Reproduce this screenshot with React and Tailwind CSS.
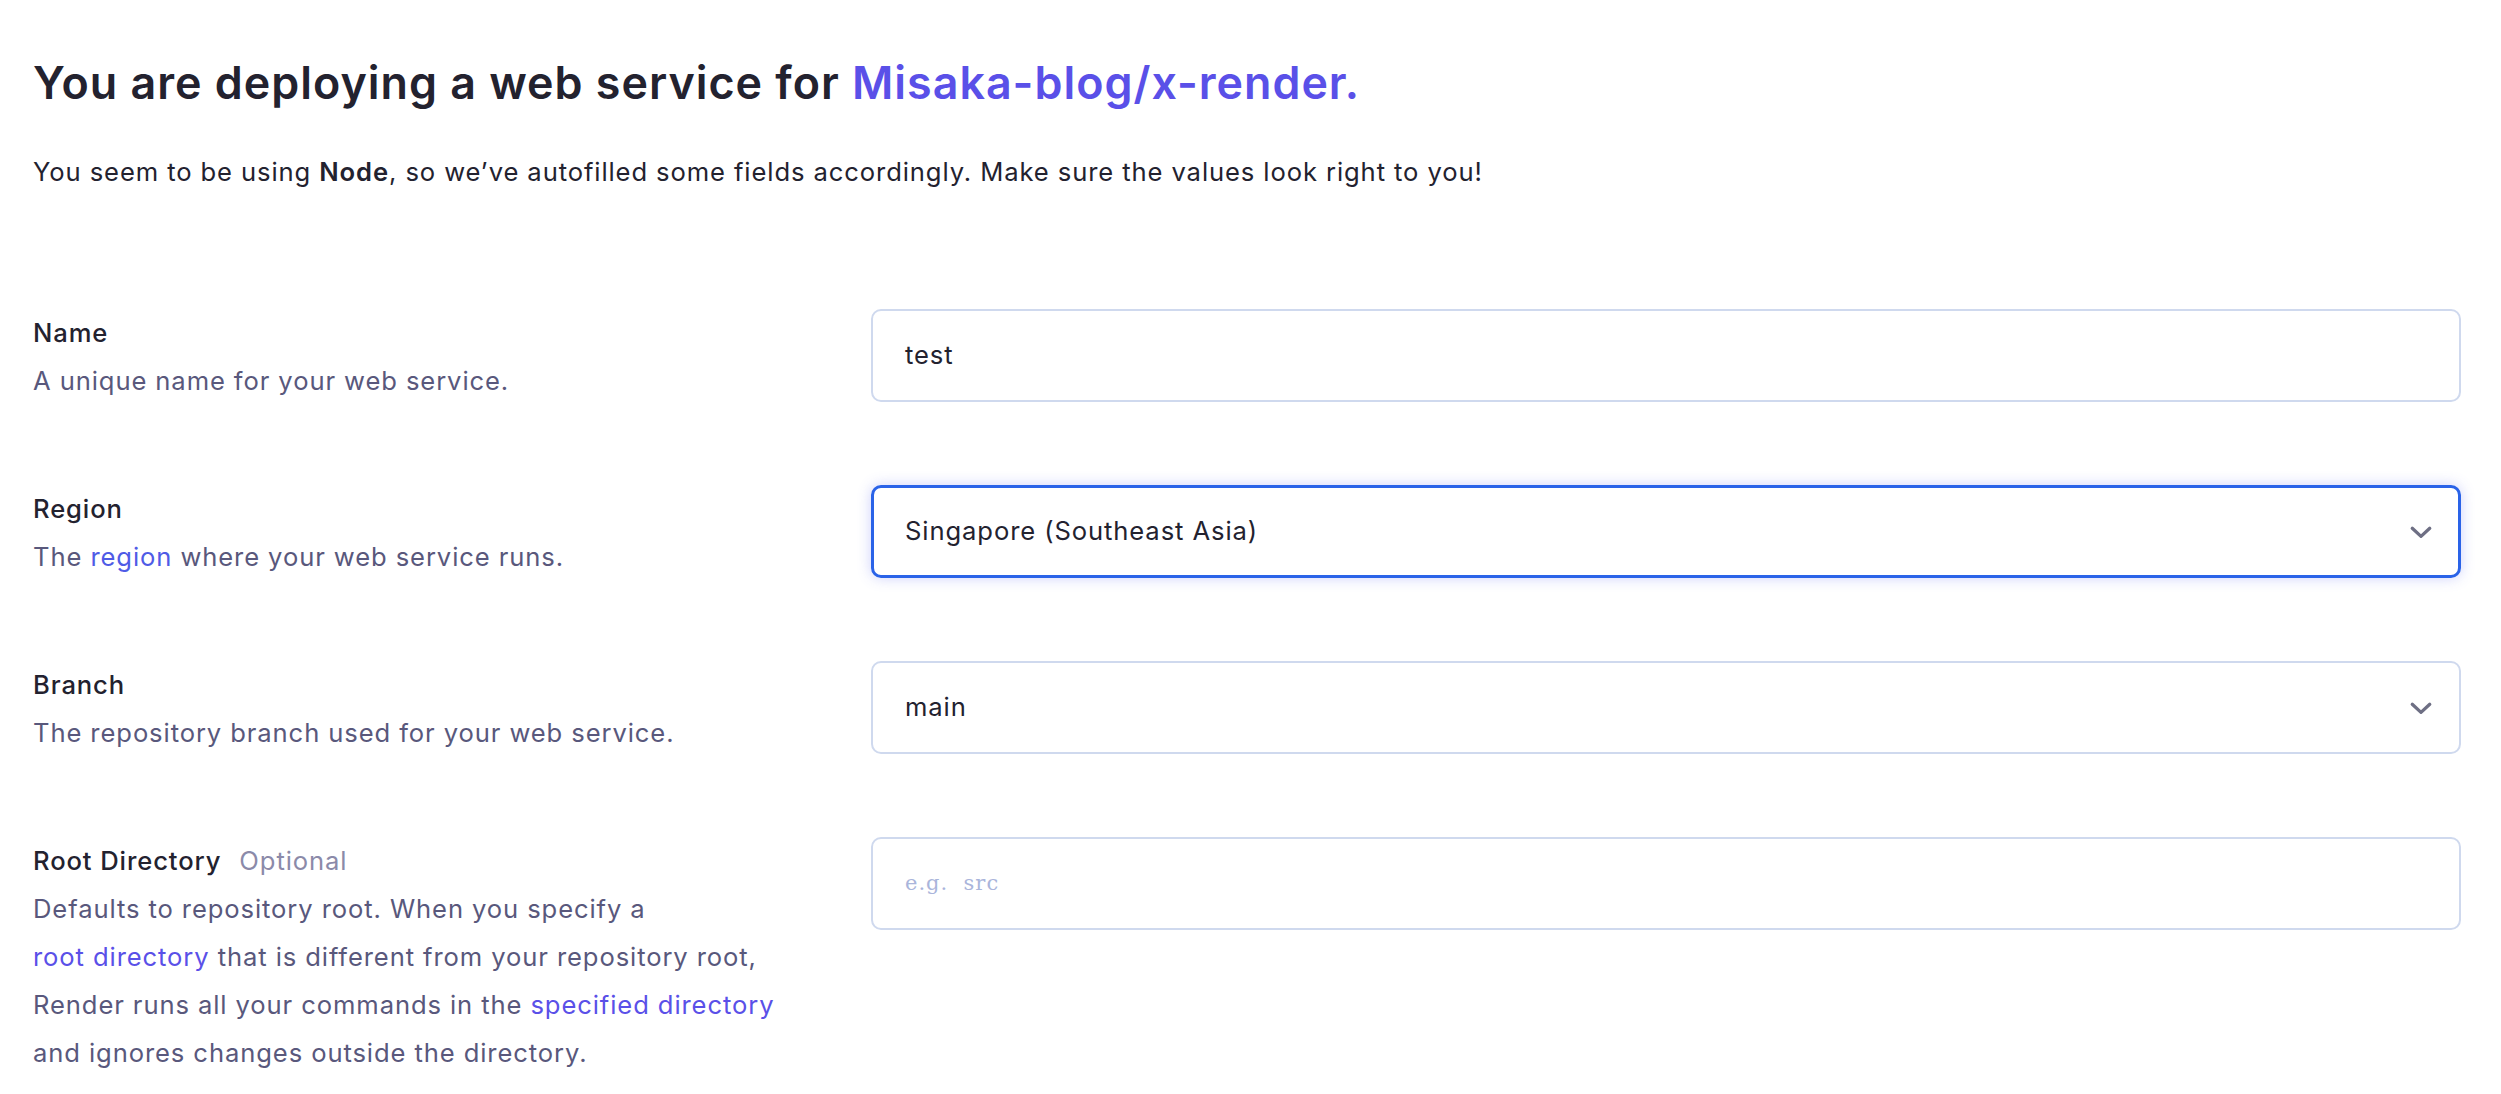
import React from 'react';

function Chevron() {
    return (
        <svg viewBox="0 0 24 24" fill="none" stroke="#6e6f84" strokeWidth={2.6} strokeLinecap="round" strokeLinejoin="round" className="w-[30px] h-[30px]">
            <path d="M5 9l7 6.5L19 9" />
        </svg>
    );
}

function Field({ label, optional, children, control }) {
    return (
        <div className="flex gap-[63px]">
            <div className="w-[775px] shrink-0 text-[25.6px] leading-[48px] tracking-[0.9px]">
                <div className="flex items-baseline gap-[18px]">
                    <span className="font-medium text-[#23222f]">{label}</span>
                    {optional && <span className="text-[#8b8aa9]">Optional</span>}
                </div>
                <div className="text-[#59587c]">{children}</div>
            </div>
            <div className="flex-1">{control}</div>
        </div>
    );
}

const link = 'text-[#5a50e8]';

export default function App() {
    return (
        <div className="min-h-screen bg-white pl-[33px] pr-[40px] pt-[55px] pb-[40px] font-['Inter',sans-serif] text-[#23222f]">
            <h1 className="text-[44.8px] leading-[56px] font-semibold tracking-[1px]">
                You are deploying a web service for <span className="text-[#5a50e8]">Misaka-blog/x-render.</span>
            </h1>
            <p className="mt-[37px] text-[25.6px] leading-[48px] tracking-[0.9px] text-[#23222f]">
                You seem to be using <span className="font-semibold">Node</span>, so we’ve autofilled some fields accordingly. Make sure the values look right to you!
            </p>

            <div className="mt-[113px] flex flex-col gap-[80px]">
                <Field
                    label="Name"
                    control={
                        <div className="h-[93px] rounded-[10px] border-2 border-[#cfd9ee] px-[32px] flex items-center text-[25.6px] tracking-[0.9px] text-[#23222f]">
                            test
                        </div>
                    }
                >
                    A unique name for your web service.
                </Field>

                <Field
                    label="Region"
                    control={
                        <div className="h-[93px] rounded-[10px] border-[3px] border-[#2a63e8] shadow-[0_0_14px_rgba(80,90,240,0.28)] pl-[31px] pr-[22px] flex items-center justify-between text-[25.6px] tracking-[0.9px] text-[#23222f]">
                            <span>Singapore (Southeast Asia)</span>
                            <Chevron />
                        </div>
                    }
                >
                    The <span className="text-[#4f5be6]">region</span> where your web service runs.
                </Field>

                <Field
                    label="Branch"
                    control={
                        <div className="h-[93px] rounded-[10px] border-2 border-[#cfd9ee] pl-[32px] pr-[23px] flex items-center justify-between text-[25.6px] tracking-[0.9px] text-[#23222f]">
                            <span>main</span>
                            <Chevron />
                        </div>
                    }
                >
                    The repository branch used for your web service.
                </Field>

                <Field
                    label="Root Directory"
                    optional
                    control={
                        <div className="h-[93px] rounded-[10px] border-2 border-[#cfd9ee] px-[32px] flex items-center font-['DejaVu_Serif',serif] text-[21px] tracking-[1px] text-[#aab5db]">
                            e.g.&nbsp;&nbsp;src
                        </div>
                    }
                >
                    Defaults to repository root. When you specify a{' '}
                    <span className={`${link} whitespace-nowrap`}>root directory</span> that is different from your repository root,
                    Render runs all your commands in the <span className={link}>specified directory</span> and ignores changes outside the directory.
                </Field>
            </div>
        </div>
    );
}
